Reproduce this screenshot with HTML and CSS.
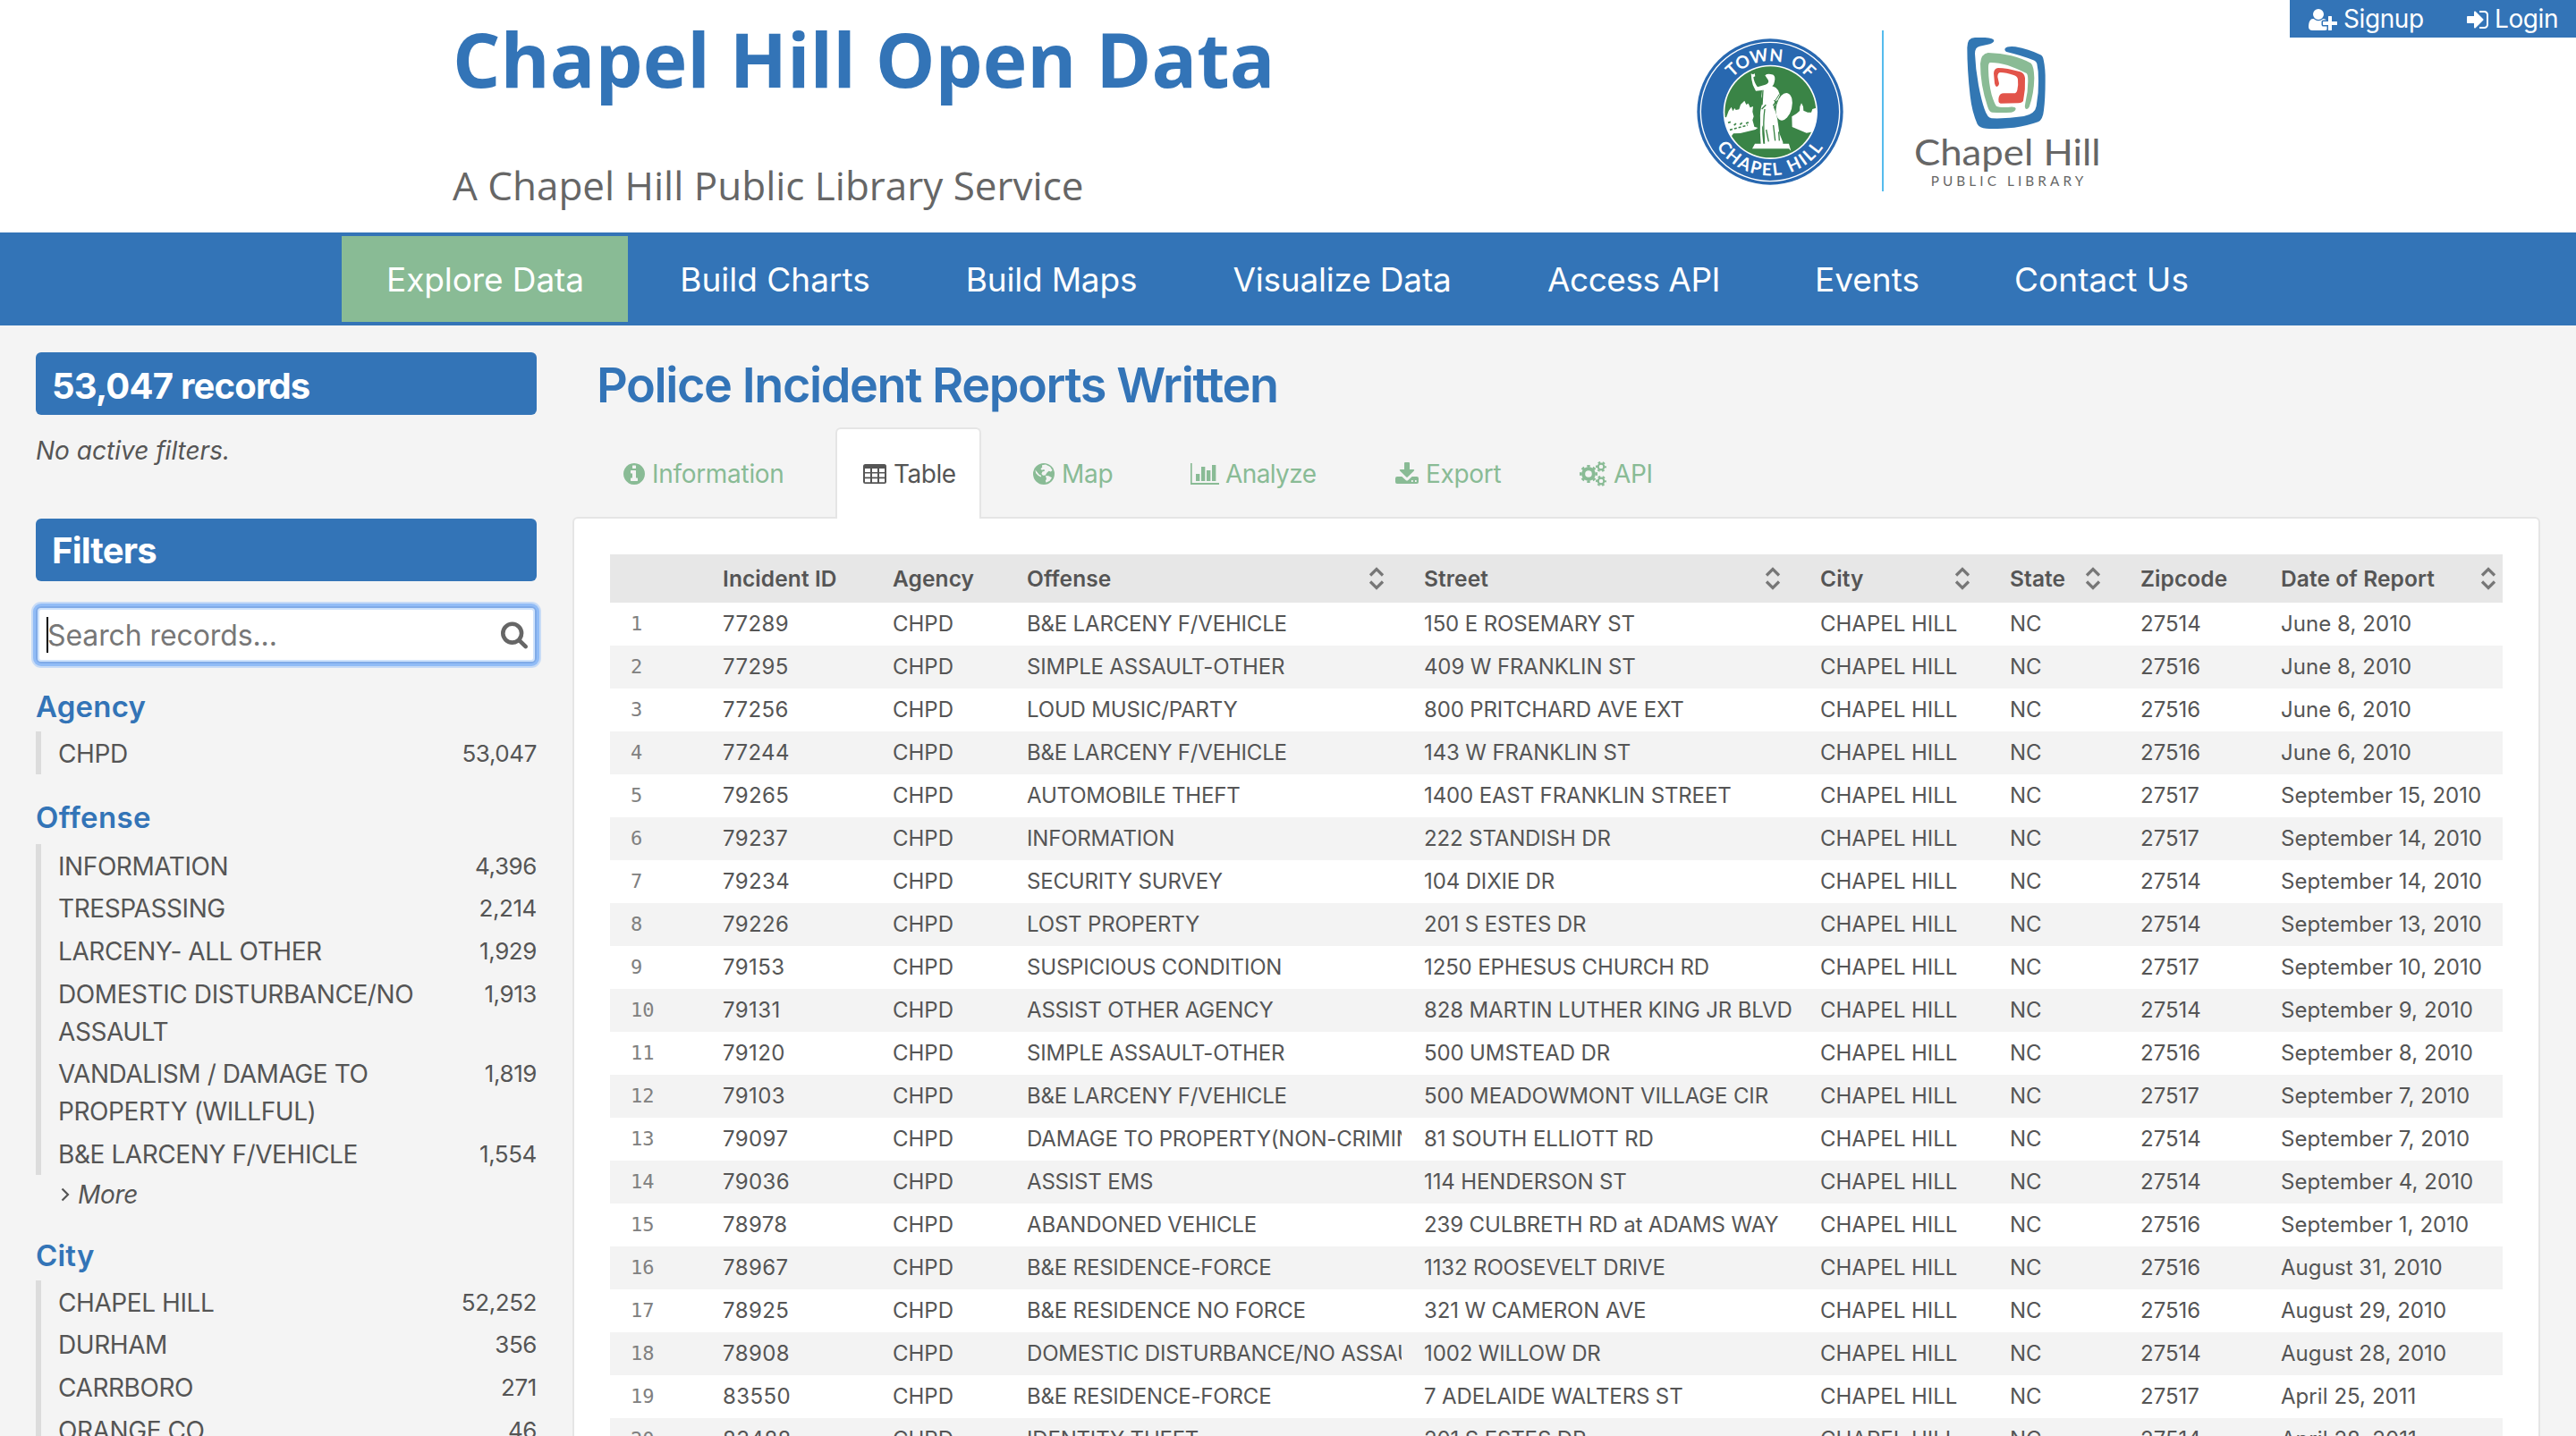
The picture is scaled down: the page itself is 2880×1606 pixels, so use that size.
FILE: index.html
```html
<!DOCTYPE html>
<html lang="en">
<head>
<meta charset="utf-8">
<title>Chapel Hill Open Data</title>
<link rel="stylesheet" href="styles.css">
</head>
<body>
<svg width="0" height="0" class="defs" aria-hidden="true">
  <symbol id="sort" viewBox="0 0 18 26"><path d="M2 9.500L9 2.500L16 9.500M2 16.500L9 23.500L16 16.500" fill="none" stroke="#777" stroke-width="3.200"/></symbol>
</svg>

<div class="account">
  <a class="signup"><svg viewBox="0 0 2048 1792" width="32" height="28"><path fill="#fff" d="M704 896q-159 0-271.500-112.500t-112.500-271.500 112.500-271.500 271.500-112.500 271.500 112.500 112.500 271.500-112.500 271.500-271.500 112.500zm960 128h352q13 0 22.500 9.500t9.500 22.500v192q0 13-9.500 22.500t-22.500 9.500h-352v352q0 13-9.500 22.500t-22.500 9.500h-192q-13 0-22.500-9.500t-9.500-22.500v-352h-352q-13 0-22.500-9.500t-9.500-22.500v-192q0-13 9.500-22.500t22.500-9.500h352v-352q0-13 9.500-22.500t22.500-9.500h192q13 0 22.500 9.500t9.500 22.500v352zm-736 224q0 52 38 90t90 38h256v238q-68 50-171 50h-874q-121 0-194-69t-73-190q0-53 3.500-103.500t14-109 26.500-108.500 43-97.500 62-81 85.500-53.500 111.500-20q19 0 39 17 79 61 154.500 91.500t164.500 30.500 164.500-30.500 154.500-91.500q20-17 39-17 132 0 217 96h-223q-52 0-90 38t-38 90v192z"/></svg><span>Signup</span></a>
  <a class="login"><svg viewBox="128 0 1536 1792" width="24" height="28"><path fill="#fff" d="M1312 896q0 26-19 45l-544 544q-19 19-45 19t-45-19-19-45v-288h-448q-26 0-45-19t-19-45v-384q0-26 19-45t45-19h448v-288q0-26 19-45t45-19 45 19l544 544q19 19 19 45zm352-352v704q0 119-84.500 203.500t-203.500 84.500h-320q-13 0-22.500-9.500t-9.500-22.500q0-4-1-20t-.5-26.500 3-23.500 10-19.500 20.500-6.500h320q66 0 113-47t47-113v-704q0-66-47-113t-113-47h-312l-11.500-1-11.500-3-8-5.500-7-9-2-13.500q0-4-1-20t-.5-26.500 3-23.500 10-19.500 20.500-6.500h320q119 0 203.500 84.500t84.500 203.500z"/></svg><span>Login</span></a>
</div>

<header class="header">
  <div class="brand">
    <h1>Chapel Hill Open Data</h1>
    <p>A Chapel Hill Public Library Service</p>
  </div>
  <svg class="logos" viewBox="0 0 1560 780" width="520" height="260">
    <!-- town seal -->
    <circle cx="357" cy="375" r="245" fill="#2868b0"/>
    <circle cx="357" cy="375" r="233" fill="none" stroke="#fff" stroke-width="4"/>
    <circle cx="358" cy="376" r="158" fill="#fff"/>
    <circle cx="358" cy="376" r="153" fill="#3a8446"/>
    <clipPath id="disc"><circle cx="358" cy="376" r="155"/></clipPath>
    <g fill="#fff" clip-path="url(#disc)">
      <path d="M200 392l10 2 8-22 9-13 5 14 6-10 4 6 11-2 5-16 13-13 6 13 7-4 6 14 10-4-2 18 4 16-4 12 4 14 2 8 12 4-9 6-50 12-23 1-6 8-3 14-10-14z"/>
      <path d="M430 391l16-10 10-9 1-14 5-12 6 12 1 13 14 6 12 0 4-11 12-4 6 30-14 50-24 4-48-20z"/>
      <path d="M306 482L420 482L427 506L420 499L297 499Z"/>
      <path d="M340 253q8-7 23-3q11 2 10 16q-2 18-9 23q14 4 20 14l6 16l-14 30l-6 14q10 20 14 54l4 30l12 30l0 8l-12 2l-8 8l-10-4l-8 6l-12-4l-10-6q-4-60-10-66q0 30 4 62l-8 4q-4-46-2-84q-2-30 6-54q3-16-2-26l2-20l-21 2q-12-18-14-38l-2-20l7 3l5-4l2 10l-6 3q2 18 14 33l26-8l6-3q7-6 4-12z"/>
      <ellipse cx="404" cy="358" rx="26" ry="47" transform="rotate(14 404 358)"/>
    </g>
    <path d="M333 302l-3 50m13 0l-14 14m10 0q-6 40-2 104m34-134l8 12m-12 6l14-16M368 420l6 52m12-30l2 30M344 435l8 40" fill="none" stroke="#3a8446" stroke-width="4"/>
    <path d="M388 316q-18 20-18 46" fill="none" stroke="#3a8446" stroke-width="3"/>
    <path d="M216 412l12-4m8 12l10-8m10 6l10-8m10 4l10-4M222 436l60-16" fill="none" stroke="#3a8446" stroke-width="5" stroke-dasharray="9 6"/>
    <path id="arcTop" d="M240 252A170 170 0 0 1 476 254" fill="none"/>
    <path id="arcBottom" d="M180 495A214 214 0 0 0 536 493" fill="none"/>
    <text class="seal-text"><textPath href="#arcTop" startOffset="50%" text-anchor="middle">TOWN OF</textPath></text>
    <text class="seal-text seal-bottom"><textPath href="#arcBottom" startOffset="50%" text-anchor="middle">CHAPEL HILL</textPath></text>
    <rect x="732" y="102" width="6" height="540" fill="#55bced"/>
    <!-- library mark -->
    <path fill="#3277b3" d="M1018 160Q1018 126 1044 126H1078Q1108 128 1108 137Q1106 145 1084 150L1060 155Q1044 158 1044 180Q1046 232 1056 286Q1066 338 1076 366Q1086 396 1100 397Q1150 399 1208 390Q1246 382 1250 356Q1258 312 1257 272Q1258 240 1252 214Q1250 205 1238 201Q1200 186 1150 174Q1142 170 1145 163Q1152 154 1180 157Q1224 165 1262 183Q1272 187 1274 200Q1281 232 1280 272Q1280 330 1275 370Q1272 402 1256 409Q1220 422 1176 428Q1110 434 1082 431Q1060 430 1052 416Q1034 376 1028 322Q1018 236 1018 160Z"/>
    <path fill="#8abb95" d="M1062 214Q1064 180 1088 177Q1130 178 1166 187Q1204 197 1232 212Q1242 222 1243 262Q1242 316 1226 359Q1219 370 1213 364Q1210 358 1213 346Q1222 308 1222 272Q1222 250 1217 246Q1190 232 1154 219Q1120 209 1094 210Q1088 212 1089 232Q1090 280 1100 318Q1110 350 1116 356Q1124 361 1154 360Q1178 356 1181 364Q1181 374 1166 377Q1132 379 1102 377Q1092 376 1086 356Q1062 286 1062 214Z"/>
    <path fill="#e2544a" d="M1107 246Q1108 230 1122 228Q1150 228 1196 241Q1210 246 1212 262Q1214 300 1206 338Q1203 344 1190 346L1130 347Q1120 344 1124 326Q1128 312 1142 313H1174Q1184 313 1186 302Q1190 284 1188 266Q1186 256 1174 252Q1148 243 1130 243Q1120 243 1120 258L1125 280Q1124 290 1117 291Q1112 290 1110 280Z"/>
    <text class="lib-name" x="840" y="555" textLength="626" lengthAdjust="spacingAndGlyphs">Chapel Hill</text>
    <text class="lib-sub" x="896" y="624" textLength="512">PUBLIC LIBRARY</text>
  </svg>
</header>

<nav class="nav">
  <a class="w320 active">Explore Data</a>
  <a class="w312">Build Charts</a>
  <a class="w290">Build Maps</a>
  <a class="w344">Visualize Data</a>
  <a class="w292">Access API</a>
  <a class="w214">Events</a>
  <a class="w294">Contact Us</a>
</nav>

<div class="content">
  <aside class="sidebar">
    <h2 class="banner records">53,047 records</h2>
    <p class="no-filters">No active filters.</p>
    <h2 class="banner">Filters</h2>
    <div class="search"><i class="caret"></i><span>Search records...</span><svg viewBox="64 128 1664 1664" width="30" height="31"><path fill="#666" d="M1216 832q0-185-131.500-316.500t-316.500-131.500-316.500 131.500-131.500 316.500 131.500 316.500 316.500 131.500 316.500-131.500 131.500-316.500zm512 832q0 52-38 90t-90 38q-54 0-90-38l-343-342q-179 124-399 124-143 0-273.500-55.500t-225-150-150-225-55.500-273.500 55.500-273.500 150-225 225-150 273.500-55.500 273.500 55.500 225 150 150 225 55.500 273.500q0 220-124 399l343 343q37 37 37 90z"/></svg></div>

    <h3>Agency</h3>
    <ul>
      <li><span>CHPD</span><b>53,047</b></li>
    </ul>
    <h3 class="offense">Offense</h3>
    <ul>
      <li><span>INFORMATION</span><b>4,396</b></li>
      <li><span>TRESPASSING</span><b>2,214</b></li>
      <li><span>LARCENY- ALL OTHER</span><b>1,929</b></li>
      <li><span>DOMESTIC DISTURBANCE/NO ASSAULT</span><b>1,913</b></li>
      <li><span>VANDALISM / DAMAGE TO PROPERTY (WILLFUL)</span><b>1,819</b></li>
      <li><span>B&amp;E LARCENY F/VEHICLE</span><b>1,554</b></li>
    </ul>
    <a class="more"><svg width="10" height="16" viewBox="0 0 10 16"><path d="M1.500 1.500L8 8L1.500 14.500" fill="none" stroke="#555" stroke-width="2.200"/></svg>More</a>
    <h3>City</h3>
    <ul>
      <li><span>CHAPEL HILL</span><b>52,252</b></li>
      <li><span>DURHAM</span><b>356</b></li>
      <li><span>CARRBORO</span><b>271</b></li>
      <li><span>ORANGE CO</span><b>46</b></li>
    </ul>
  </aside>

  <main class="main">
    <h2 class="title">Police Incident Reports Written</h2>
    <div class="tabs">
      <a class="t-info"><svg viewBox="128 128 1536 1536" width="24" height="24"><path fill="#89bb95" d="M1152 1376v-160q0-14-9-23t-23-9h-96v-512q0-14-9-23t-23-9h-320q-14 0-23 9t-9 23v160q0 14 9 23t23 9h96v320h-96q-14 0-23 9t-9 23v160q0 14 9 23t23 9h448q14 0 23-9t9-23zm-128-896v-160q0-14-9-23t-23-9h-192q-14 0-23 9t-9 23v160q0 14 9 23t23 9h192q14 0 23-9t9-23zm640 416q0 209-103 385.500t-279.500 279.500-385.500 103-385.500-103-279.500-279.500-103-385.500 103-385.500 279.500-279.500 385.500-103 385.500 103 279.500 279.500 103 385.500z"/></svg>Information</a>
      <a class="t-table active"><svg viewBox="0 0 26 22" width="26" height="22"><rect width="26" height="22" rx="2.500" fill="#555"/><path fill="#fff" d="M2 5h6v4H2zM10 5h6v4h-6zM18 5h6v4h-6zM2 10.600h6v4H2zM10 10.600h6v4h-6zM18 10.600h6v4h-6zM2 16.200h6v4H2zM10 16.200h6v4h-6zM18 16.200h6v4h-6z"/></svg>Table</a>
      <a class="t-map"><svg viewBox="0 0 24 24" width="24" height="24"><circle cx="12" cy="12" r="12" fill="#89bb95"/><path fill="#f4f4f4" d="M10 2.200l4-.7 5 2.500 2.600 4-1.800 1.600-2.200-.8-2.200 2-1.600 2.600-2.800.4-1.600-1.800 1-2.400 2.600-.8-.6-1.800-2.600.8-1.400-1.600 1.800-1.400zM14 14l3.400.2 3.600 2-2.400 3.600-4 2-.8-2 1.200-2zM2.400 7.600l2 2.200 2.400 3 2.400 1.200-.6 1.400-3-1.600-2.400-2.600z"/></svg>Map</a>
      <a class="t-analyze"><svg viewBox="0 0 96 72" width="32" height="24"><path fill="#89bb95" d="M0 0h5v66h91v6H0zM18 36h13v24H18zM36 12h13v48H36zM54 24h13v36H54zM72 6h13v54H72z"/></svg>Analyze</a>
      <a class="t-export"><svg viewBox="0 0 78 72" width="26" height="24"><path fill="#89bb95" fill-rule="evenodd" d="M30 3q0-3 3-3h12q3 0 3 3v21h13q5 0 1 5L42 49q-3 3-6 0L16 29q-4-5 1-5h13zM6 48h16l13 12q4 3 8 0l13-12h16q6 0 6 6v12q0 6-6 6H6q-6 0-6-6V54q0-6 6-6zm48 12v6h5v-6zm12 0v6h5v-6z"/></svg>Export</a>
      <a class="t-api"><svg viewBox="0 0 90 84" width="30" height="28"><g fill="none" stroke="#89bb95"><circle cx="30" cy="42" r="17.500" stroke-width="12"/><circle cx="30" cy="42" r="26" stroke-width="8" pathLength="16" stroke-dasharray="1 1" stroke-dashoffset=".5"/><circle cx="72" cy="18" r="10" stroke-width="6.500"/><circle cx="72" cy="18" r="15" stroke-width="6" pathLength="12" stroke-dasharray="1 1" stroke-dashoffset=".5"/><circle cx="72" cy="66" r="10" stroke-width="6.500"/><circle cx="72" cy="66" r="15" stroke-width="6" pathLength="12" stroke-dasharray="1 1" stroke-dashoffset=".5"/></g></svg>API</a>
    </div>
    <section class="panel">
      <table>
        <colgroup><col class="c0"><col class="c1"><col class="c2"><col class="c3"><col class="c4"><col class="c5"><col class="c6"><col class="c7"><col class="c8"></colgroup>
        <thead>
          <tr><th></th><th>Incident ID</th><th>Agency</th><th><div>Offense<svg><use href="#sort"/></svg></div></th><th><div>Street<svg><use href="#sort"/></svg></div></th><th><div>City<svg><use href="#sort"/></svg></div></th><th><div>State<svg><use href="#sort"/></svg></div></th><th>Zipcode</th><th class="last"><div>Date of Report<svg><use href="#sort"/></svg></div></th></tr>
        </thead>
        <tbody>
          <tr><td>1</td><td>77289</td><td>CHPD</td><td>B&amp;E LARCENY F/VEHICLE</td><td>150 E ROSEMARY ST</td><td>CHAPEL HILL</td><td>NC</td><td>27514</td><td>June 8, 2010</td></tr>
          <tr><td>2</td><td>77295</td><td>CHPD</td><td>SIMPLE ASSAULT-OTHER</td><td>409 W FRANKLIN ST</td><td>CHAPEL HILL</td><td>NC</td><td>27516</td><td>June 8, 2010</td></tr>
          <tr><td>3</td><td>77256</td><td>CHPD</td><td>LOUD MUSIC/PARTY</td><td>800 PRITCHARD AVE EXT</td><td>CHAPEL HILL</td><td>NC</td><td>27516</td><td>June 6, 2010</td></tr>
          <tr><td>4</td><td>77244</td><td>CHPD</td><td>B&amp;E LARCENY F/VEHICLE</td><td>143 W FRANKLIN ST</td><td>CHAPEL HILL</td><td>NC</td><td>27516</td><td>June 6, 2010</td></tr>
          <tr><td>5</td><td>79265</td><td>CHPD</td><td>AUTOMOBILE THEFT</td><td>1400 EAST FRANKLIN STREET</td><td>CHAPEL HILL</td><td>NC</td><td>27517</td><td>September 15, 2010</td></tr>
          <tr><td>6</td><td>79237</td><td>CHPD</td><td>INFORMATION</td><td>222 STANDISH DR</td><td>CHAPEL HILL</td><td>NC</td><td>27517</td><td>September 14, 2010</td></tr>
          <tr><td>7</td><td>79234</td><td>CHPD</td><td>SECURITY SURVEY</td><td>104 DIXIE DR</td><td>CHAPEL HILL</td><td>NC</td><td>27514</td><td>September 14, 2010</td></tr>
          <tr><td>8</td><td>79226</td><td>CHPD</td><td>LOST PROPERTY</td><td>201 S ESTES DR</td><td>CHAPEL HILL</td><td>NC</td><td>27514</td><td>September 13, 2010</td></tr>
          <tr><td>9</td><td>79153</td><td>CHPD</td><td>SUSPICIOUS CONDITION</td><td>1250 EPHESUS CHURCH RD</td><td>CHAPEL HILL</td><td>NC</td><td>27517</td><td>September 10, 2010</td></tr>
          <tr><td>10</td><td>79131</td><td>CHPD</td><td>ASSIST OTHER AGENCY</td><td>828 MARTIN LUTHER KING JR BLVD</td><td>CHAPEL HILL</td><td>NC</td><td>27514</td><td>September 9, 2010</td></tr>
          <tr><td>11</td><td>79120</td><td>CHPD</td><td>SIMPLE ASSAULT-OTHER</td><td>500 UMSTEAD DR</td><td>CHAPEL HILL</td><td>NC</td><td>27516</td><td>September 8, 2010</td></tr>
          <tr><td>12</td><td>79103</td><td>CHPD</td><td>B&amp;E LARCENY F/VEHICLE</td><td>500 MEADOWMONT VILLAGE CIR</td><td>CHAPEL HILL</td><td>NC</td><td>27517</td><td>September 7, 2010</td></tr>
          <tr><td>13</td><td>79097</td><td>CHPD</td><td><div class="clip">DAMAGE TO PROPERTY(NON-CRIMINAL)</div></td><td>81 SOUTH ELLIOTT RD</td><td>CHAPEL HILL</td><td>NC</td><td>27514</td><td>September 7, 2010</td></tr>
          <tr><td>14</td><td>79036</td><td>CHPD</td><td>ASSIST EMS</td><td>114 HENDERSON ST</td><td>CHAPEL HILL</td><td>NC</td><td>27514</td><td>September 4, 2010</td></tr>
          <tr><td>15</td><td>78978</td><td>CHPD</td><td>ABANDONED VEHICLE</td><td>239 CULBRETH RD at ADAMS WAY</td><td>CHAPEL HILL</td><td>NC</td><td>27516</td><td>September 1, 2010</td></tr>
          <tr><td>16</td><td>78967</td><td>CHPD</td><td>B&amp;E RESIDENCE-FORCE</td><td>1132 ROOSEVELT DRIVE</td><td>CHAPEL HILL</td><td>NC</td><td>27516</td><td>August 31, 2010</td></tr>
          <tr><td>17</td><td>78925</td><td>CHPD</td><td>B&amp;E RESIDENCE NO FORCE</td><td>321 W CAMERON AVE</td><td>CHAPEL HILL</td><td>NC</td><td>27516</td><td>August 29, 2010</td></tr>
          <tr><td>18</td><td>78908</td><td>CHPD</td><td><div class="clip">DOMESTIC DISTURBANCE/NO ASSAULT</div></td><td>1002 WILLOW DR</td><td>CHAPEL HILL</td><td>NC</td><td>27514</td><td>August 28, 2010</td></tr>
          <tr><td>19</td><td>83550</td><td>CHPD</td><td>B&amp;E RESIDENCE-FORCE</td><td>7 ADELAIDE WALTERS ST</td><td>CHAPEL HILL</td><td>NC</td><td>27517</td><td>April 25, 2011</td></tr>
          <tr><td>20</td><td>83488</td><td>CHPD</td><td>IDENTITY THEFT</td><td>201 S ESTES DR</td><td>CHAPEL HILL</td><td>NC</td><td>27514</td><td>April 28, 2011</td></tr>
        </tbody>
      </table>
    </section>
  </main>
</div>
</body>
</html>
```
FILE: styles.css
```css
* { box-sizing: border-box; margin: 0; padding: 0; }
body {
  position: relative;
  width: 2880px;
  height: 1606px;
  overflow: hidden;
  background: #f4f4f4;
  color: #555;
  font-family: Inter, "Liberation Sans", sans-serif;
}
svg { flex: none; display: block; }
.defs { position: absolute; }

/* account links pinned over the header */
.account {
  position: absolute;
  top: 0;
  right: 0;
  width: 320px;
  height: 42px;
  display: flex;
  background: #3374b7;
  color: #fff;
  font-size: 28px;
  line-height: 44px;
  letter-spacing: -0.4px;
}
.account a { display: flex; align-items: center; }
.account svg { margin-top: 1px; }
.signup { width: 198px; padding-left: 21px; gap: 7px; }
.login { gap: 7px; }

.header {
  display: flex;
  height: 260px;
  background: #fff;
}
.brand {
  width: 1860px;
  padding: 16px 0 0 506px;
  font-family: "Open Sans", "Noto Sans", sans-serif;
}
.brand h1 {
  font-size: 84px;
  line-height: 100px;
  font-weight: 700;
  color: #3374b7;
}
.brand p {
  margin-top: 61px;
  font-size: 44px;
  line-height: 60px;
  color: #666;
}
.seal-text { font: 700 58px Lato, sans-serif; fill: #fff; letter-spacing: -1px; word-spacing: 14px; }
.seal-bottom { letter-spacing: 6px; word-spacing: 4px; }
.lib-name { font: 400 120px Lato, sans-serif; fill: #666; }
.lib-sub { font: 400 46px Lato, sans-serif; fill: #666; }

.nav {
  display: flex;
  gap: 8px;
  height: 104px;
  padding: 4px 0 4px 382px;
  background: #3374b7;
}
.nav a {
  padding-left: 1px;
  color: #fff;
  font-size: 37px;
  line-height: 97px;
  text-align: center;
  white-space: nowrap;
}
.nav .active { background: #89bb95; }
.w320 { width: 320px; letter-spacing: -0.1px; }
.w312 { width: 312px; }
.w290 { width: 290px; letter-spacing: -0.2px; }
.w344 { width: 344px; letter-spacing: -0.2px; }
.w292 { width: 292px; letter-spacing: -0.5px; }
.w214 { width: 214px; }
.w294 { width: 294px; }

.content { display: flex; }

.sidebar { width: 640px; padding: 30px 40px 0; }
.banner {
  height: 70px;
  padding-left: 18px;
  border-radius: 6px;
  background: #3374b7;
  color: #fff;
  font-size: 40px;
  font-weight: 700;
  line-height: 71px;
  letter-spacing: -0.8px;
}
.records { padding-top: 2px; }
.no-filters {
  margin: 20px 0 56px;
  font-size: 28px;
  line-height: 40px;
  font-style: italic;
}
.search {
  display: flex;
  align-items: center;
  height: 64px;
  margin: 28px 0;
  padding: 0 8px 0 10px;
  border: 2px solid #80abe8;
  border-radius: 6px;
  background: #fff;
  box-shadow: 0 0 0 3px #91bcf6, 0 0 0 5px #c7dbf6, inset 0 0 0 2px #d0e3fb;
  font-size: 32px;
  letter-spacing: -0.1px;
  color: #777;
}
.search span { flex: 1; }
.caret { width: 2px; height: 40px; margin-right: -1px; background: #000; }

.sidebar h3 {
  margin-bottom: 8px;
  font-size: 33px;
  line-height: 40px;
  font-weight: 600;
  letter-spacing: 0.2px;
  color: #3374b7;
}
.sidebar .offense { margin-bottom: 10px; letter-spacing: 0.4px; }
.sidebar ul {
  margin-bottom: 28px;
  border-left: 6px solid #dcdcdc;
  list-style: none;
}
.sidebar li {
  display: flex;
  justify-content: space-between;
  padding: 4px 0 1.67px 19px;
  font-size: 28px;
  line-height: 42px;
  letter-spacing: -0.42px;
}
.sidebar li span { width: 420px; }
.sidebar li b { font-weight: 400; font-size: 26px; line-height: 41px; }
.more {
  display: flex;
  align-items: center;
  gap: 9px;
  margin: -27px 0 27px;
  padding-left: 28px;
  font-size: 28px;
  line-height: 42px;
  letter-spacing: -0.3px;
  font-style: italic;
}

.main { width: 2200px; padding-top: 36px; }
.title {
  padding-left: 27px;
  font-size: 54px;
  line-height: 61px;
  font-weight: 600;
  letter-spacing: -1.4px;
  color: #3374b7;
}
.tabs {
  position: relative;
  z-index: 1;
  display: flex;
  gap: 28px;
  margin: 17px 0 -2px 27px;
}
.tabs a {
  display: flex;
  align-items: center;
  height: 102px;
  padding-left: 28px;
  border: 2px solid transparent;
  border-bottom: 0;
  color: #89bb95;
  font-size: 28px;
  letter-spacing: -0.3px;
  gap: 8px;
}
.tabs .active {
  border-color: #e5e5e5;
  border-radius: 6px 6px 0 0;
  background: #fff;
  color: #555;
}
.t-info { width: 240px; }
.tabs .t-table { width: 163px; margin-left: -1px; padding-left: 29px; letter-spacing: -0.5px; }
.t-map { width: 148px; }
.tabs .t-analyze { width: 201px; gap: 7px; letter-spacing: -0.6px; }
.t-export { width: 178px; }
.t-export svg { margin-bottom: 3px; }
.t-api { width: 141px; }

.panel {
  height: 1100px;
  padding: 40px;
  border: 2px solid #e5e5e5;
  border-radius: 6px;
  background: #fff;
}
table {
  width: 2116px;
  table-layout: fixed;
  border-collapse: collapse;
  font-size: 24px;
}
.c0 { width: 113px; }
.c1 { width: 190px; }
.c2 { width: 149px; }
.c3 { width: 445px; }
.c4 { width: 443px; }
.c5 { width: 212px; }
.c6 { width: 146px; }
.c7 { width: 157px; }
.c8 { width: 261px; }
th {
  height: 54px;
  padding: 0 12px 0 13px;
  background: #e7e7e7;
  font-size: 24.5px;
  font-weight: 600;
  line-height: 54px;
  letter-spacing: 0.1px;
  text-align: left;
  white-space: nowrap;
}
th div { display: flex; align-items: center; justify-content: space-between; }
th svg { width: 18px; height: 26px; margin-right: 19px; }
th.last svg { margin-right: -5px; }
td {
  height: 48px;
  padding: 0 12px 0 13px;
  line-height: 48px;
  white-space: nowrap;
}
td:first-child {
  padding-left: 23px;
  font-family: "DejaVu Sans Mono", monospace;
  font-size: 22px;
  color: #808080;
}
td:nth-child(2) { letter-spacing: 0.4px; }
td:nth-child(4) { letter-spacing: -0.18px; }
td:nth-child(5) { letter-spacing: -0.13px; }
td:nth-child(9) { letter-spacing: 0.06px; }
th:nth-child(4), td:nth-child(4) { padding-left: 14px; }
.clip { overflow: hidden; }
tbody tr:nth-child(even) { background: #f3f3f3; }
```
